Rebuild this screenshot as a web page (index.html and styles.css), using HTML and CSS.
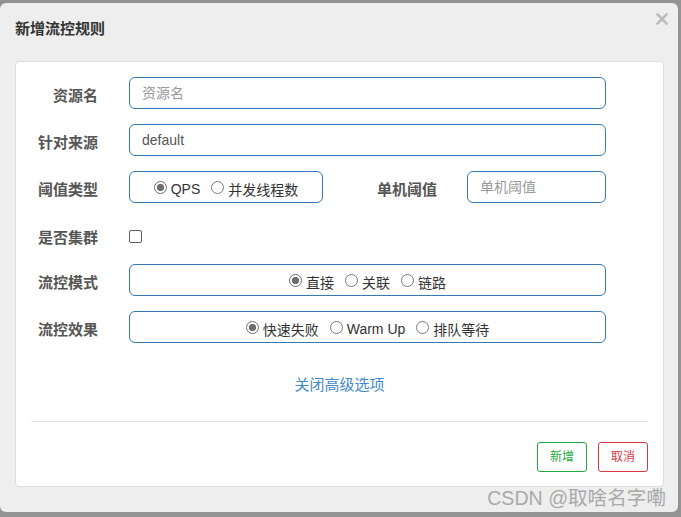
FILE: index.html
```html
<!DOCTYPE html>
<html lang="zh">
<head>
<meta charset="utf-8">
<title>新增流控规则</title>
<link rel="stylesheet" href="styles.css">
</head>
<body>
<div class="dialog">
  <div class="dialog-header">
    <h4 class="title">新增流控规则</h4>
    <span class="close" aria-label="关闭">
      <svg class="close-icon" width="12" height="12" viewBox="0 0 12 12">
        <path d="M1.5 1.5 L10.5 10.5 M10.5 1.5 L1.5 10.5" stroke="#bdbdbd" stroke-width="2.6" stroke-linecap="square" fill="none"/>
      </svg>
    </span>
  </div>
  <div class="panel">
    <form class="form">
      <div class="row">
        <label class="label">资源名</label>
        <input class="input input-wide" type="text" placeholder="资源名">
      </div>
      <div class="row">
        <label class="label">针对来源</label>
        <input class="input input-wide" type="text" value="default">
      </div>
      <div class="row">
        <label class="label">阈值类型</label>
        <div class="box box-small">
          <label class="opt"><input class="radio" type="radio" name="grade" checked>QPS</label>
          <label class="opt"><input class="radio" type="radio" name="grade">并发线程数</label>
        </div>
        <label class="label label-mid">单机阈值</label>
        <input class="input input-small" type="text" placeholder="单机阈值">
      </div>
      <div class="row row-check">
        <label class="label">是否集群</label>
        <input class="check" type="checkbox">
      </div>
      <div class="row">
        <label class="label">流控模式</label>
        <div class="box box-wide">
          <label class="opt"><input class="radio" type="radio" name="strategy" checked>直接</label>
          <label class="opt"><input class="radio" type="radio" name="strategy">关联</label>
          <label class="opt"><input class="radio" type="radio" name="strategy">链路</label>
        </div>
      </div>
      <div class="row row-last">
        <label class="label">流控效果</label>
        <div class="box box-wide">
          <label class="opt"><input class="radio" type="radio" name="behavior" checked>快速失败</label>
          <label class="opt"><input class="radio" type="radio" name="behavior">Warm Up</label>
          <label class="opt"><input class="radio" type="radio" name="behavior">排队等待</label>
        </div>
      </div>
    </form>
    <div class="more"><a class="link">关闭高级选项</a></div>
    <hr class="divider">
    <div class="footer">
      <button class="btn btn-green" type="button">新增</button>
      <button class="btn btn-red" type="button">取消</button>
    </div>
  </div>
  <div class="watermark">CSDN @取啥名字嘞</div>
</div>
</body>
</html>
```

FILE: styles.css
```css
* { box-sizing: border-box; }

html, body {
  margin: 0;
  padding: 0;
}

body {
  width: 681px;
  height: 517px;
  background: #939393;
  padding: 3px 3px 5px 0;
  font-family: "Liberation Sans", "Noto Sans CJK SC", sans-serif;
  font-size: 14px;
  color: #333;
  overflow: hidden;
}

.dialog {
  position: relative;
  width: 678px;
  height: 509px;
  background: #eeeeee;
  border-radius: 6px;
}

.dialog-header {
  display: flex;
  justify-content: space-between;
  align-items: flex-start;
  height: 58px;
  padding: 16px 10px 0 15px;
}

.title {
  margin: 0;
  font-size: 15px;
  line-height: 20px;
  font-weight: bold;
  color: #333;
}

.close {
  display: block;
  width: 12px;
  height: 12px;
  margin-top: -6px;
}

.close-icon {
  display: block;
}

.panel {
  margin: 0 14px 0 15px;
  height: 426px;
  background: #fff;
  border: 1px solid #dddddd;
  border-radius: 4px;
  padding: 15px;
}

.form {
  margin: 0;
}

.row {
  display: flex;
  align-items: center;
  height: 32px;
  margin-bottom: 15px;
}

.row-check {
  height: 31px;
  padding-top: 5px;
}

.row-last {
  margin-bottom: 0;
}

.label {
  width: 67px;
  margin-right: 31px;
  padding-top: 3px;
  text-align: right;
  font-size: 15px;
  font-weight: bold;
  color: #555;
  white-space: nowrap;
}

.label-mid {
  width: 114px;
  margin-right: 30px;
}

.row-check .label {
  padding-top: 0;
}

.input {
  height: 32px;
  border: 1px solid #337ab7;
  border-radius: 6px;
  padding: 0 12px;
  font-family: "Liberation Sans", "Noto Sans CJK SC", sans-serif;
  font-size: 14px;
  color: #555;
  background: #fff;
  outline: none;
}

.input::placeholder {
  color: #999;
}

.input-wide {
  width: 477px;
}

.input-small {
  width: 139px;
}

.box {
  display: flex;
  justify-content: center;
  align-items: center;
  height: 32px;
  padding-top: 3px;
  border: 1px solid #337ab7;
  border-radius: 6px;
}

.box-small {
  width: 194px;
}

.box-wide {
  width: 477px;
}

.opt {
  display: flex;
  align-items: center;
  margin-right: 11px;
  color: #333;
  font-size: 14px;
  white-space: nowrap;
}

.opt:last-child {
  margin-right: 0;
}

.radio {
  appearance: none;
  -webkit-appearance: none;
  width: 13px;
  height: 13px;
  margin: -2px 4px 0 0;
  border: 1px solid #7a7a7a;
  border-radius: 50%;
  background: #fff;
}

.radio:checked {
  border-color: #6e6e6e;
  background: radial-gradient(circle, #6e6e6e 0 3.3px, #fff 4px);
}

.check {
  appearance: none;
  -webkit-appearance: none;
  width: 13px;
  height: 13px;
  margin: 0;
  border: 1px solid #5f5f5f;
  border-radius: 2px;
  background: #fff;
}

.more {
  padding-top: 32px;
  text-align: center;
  line-height: 20px;
}

.link {
  font-size: 15px;
  color: #428bca;
  cursor: pointer;
}

.divider {
  margin: 26px 0 20px;
  border: 0;
  border-top: 1px solid #e5e5e5;
}

.footer {
  display: flex;
  justify-content: flex-end;
  gap: 11px;
}

.btn {
  height: 30px;
  padding: 0 12px;
  border-radius: 3px;
  background: #fff;
  font-family: "Liberation Sans", "Noto Sans CJK SC", sans-serif;
  font-size: 12px;
  line-height: 28px;
}

.btn-green {
  border: 1px solid #28a745;
  color: #28a745;
}

.btn-red {
  border: 1px solid #dc3545;
  color: #dc3545;
}

.watermark {
  position: absolute;
  right: 12px;
  bottom: 2px;
  font-family: "Liberation Sans", "Noto Sans CJK SC", sans-serif;
  font-size: 19.6px;
  line-height: 24px;
  color: #a9a9a9;
  white-space: nowrap;
}
```
